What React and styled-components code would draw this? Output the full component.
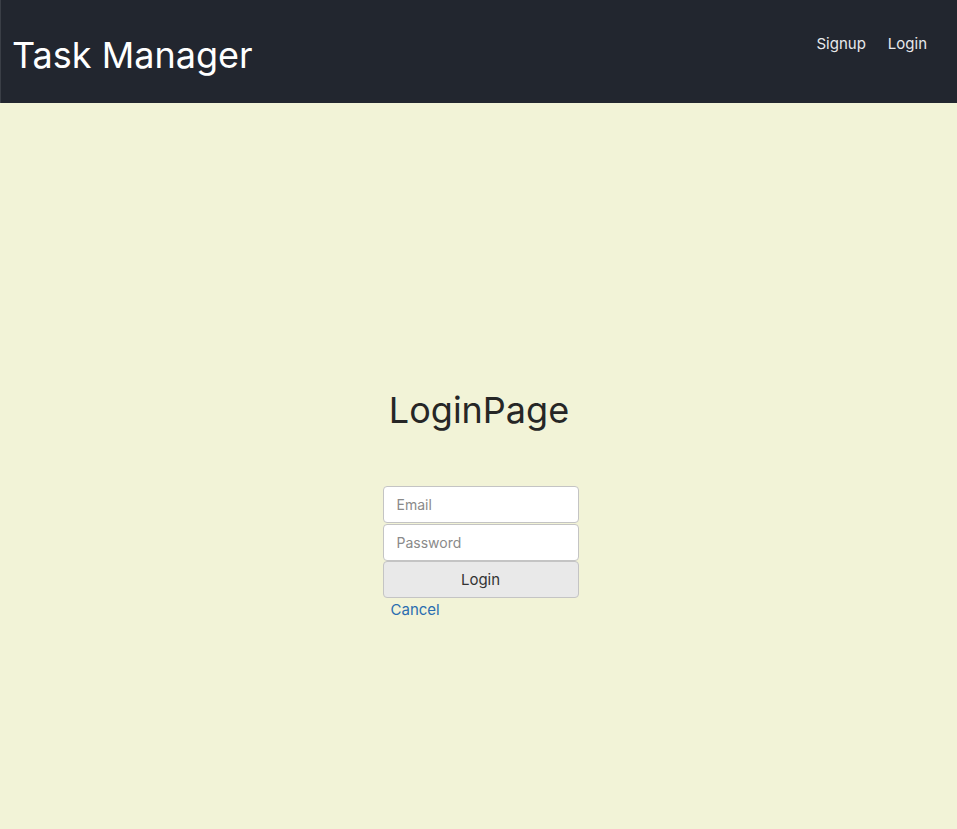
import styled, { createGlobalStyle } from 'styled-components';

const GlobalStyle = createGlobalStyle`
  body {
    margin: 0;
    font-family: Inter, "Noto Sans", sans-serif;
    background: #f2f3d7;
  }
`;

function App() {
  return (
    <>
      <GlobalStyle />
      <Page>
        <Header>
          <Brand>Task Manager</Brand>
          <Nav>
            <NavLink href="#">Signup</NavLink>
            <NavLink href="#">Login</NavLink>
          </Nav>
        </Header>
        <Main>
          <Title>LoginPage</Title>
          <Form onSubmit={(e) => e.preventDefault()}>
            <Input type="email" placeholder="Email" />
            <Input type="password" placeholder="Password" />
            <SubmitButton type="submit">Login</SubmitButton>
            <CancelLink href="#">Cancel</CancelLink>
          </Form>
        </Main>
      </Page>
    </>
  );
}

export default App;

const Page = styled.div`
  min-height: 100vh;
  display: flex;
  flex-direction: column;
`;

const Header = styled.header`
  height: 103px;
  box-sizing: border-box;
  background: #22262f;
  border-left: 1px solid #3a3e46;
  display: flex;
  align-items: flex-start;
  justify-content: space-between;
  padding: 0 30px 0 11px;
`;

const Brand = styled.h1`
  margin: 0;
  padding-top: 31px;
  font-size: 36px;
  font-weight: 400;
  line-height: 48px;
  color: #ffffff;
`;

const Nav = styled.nav`
  display: flex;
  gap: 22px;
  padding-top: 34px;
`;

const NavLink = styled.a`
  color: #e8e9ec;
  font-size: 15px;
  line-height: 20px;
  text-decoration: none;
`;

const Main = styled.main`
  flex: 1;
  display: flex;
  flex-direction: column;
  align-items: center;
  padding-top: 285px;
`;

const Title = styled.h2`
  margin: 0 0 54px 1px;
  font-size: 36px;
  font-weight: 400;
  line-height: 44px;
  color: #262626;
`;

const Form = styled.form`
  width: 196px;
  margin-left: 4px;
  display: flex;
  flex-direction: column;
`;

const Input = styled.input`
  box-sizing: border-box;
  height: 37px;
  margin-bottom: 1px;
  padding: 0 13px;
  border: 1px solid #c4c4c4;
  border-radius: 4px;
  background: #ffffff;
  font-family: inherit;
  font-size: 14px;
  color: #333;
  &::placeholder {
    color: #8a8a8a;
  }
`;

const SubmitButton = styled.button`
  box-sizing: border-box;
  height: 37px;
  margin-top: -1px;
  border: 1px solid #c4c4c4;
  border-radius: 4px;
  background: #e9e9e9;
  font-family: inherit;
  font-size: 15px;
  color: #333;
`;

const CancelLink = styled.a`
  margin: 2px 0 0 8px;
  font-size: 15px;
  line-height: 20px;
  color: #2a6db0;
  text-decoration: none;
`;
